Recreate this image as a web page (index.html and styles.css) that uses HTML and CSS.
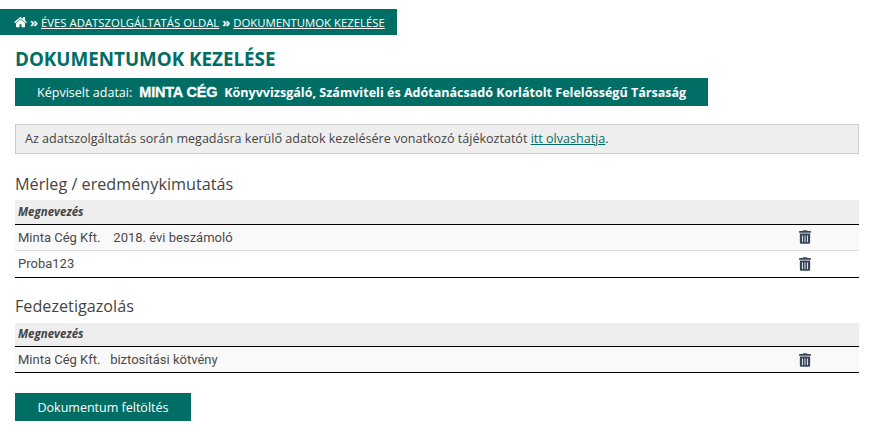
FILE: index.html
```html
<!DOCTYPE html>
<html lang="hu">
<head>
<meta charset="utf-8">
<title>Dokumentumok kezelése</title>
<link rel="stylesheet" href="styles.css">
</head>
<body>
<nav class="crumbs">
  <svg class="home" viewBox="0 0 1664 1408" aria-hidden="true"><path fill="currentColor" d="M1408 768v480q0 26-19 45t-45 19H960V928H704v384H320q-26 0-45-19t-19-45V768q0-1 .5-3t.5-3l575-474 575 474q1 2 1 6zm223-69-62 74q-8 9-21 11h-3q-13 0-21-7L832 200 140 777q-12 8-24 7-13-2-21-11l-62-74q-8-10-7-23.500t11-21.500L756 27q32-27 76-27t76 27l255 213V36q0-14 9-23t23-9h192q14 0 23 9t9 23v408l219 182q10 8 11 21.500t-7 23.500z"/></svg>
  <span class="sep">»</span>
  <a href="#">ÉVES ADATSZOLGÁLTATÁS OLDAL</a>
  <span class="sep">»</span>
  <a href="#">DOKUMENTUMOK KEZELÉSE</a>
</nav>
<main class="page">
  <h1>DOKUMENTUMOK KEZELÉSE</h1>
  <div class="rep">
    <span class="rep-label">Képviselt adatai:</span>
    <strong class="rep-logo">MINTA CÉG</strong>
    <strong class="rep-name">Könyvvizsgáló, Számviteli és Adótanácsadó Korlátolt Felelősségű Társaság</strong>
  </div>
  <p class="notice">Az adatszolgáltatás során megadásra kerülő adatok kezelésére vonatkozó tájékoztatót <a href="#">itt olvashatja</a>.</p>

  <h2 class="first">Mérleg / eredménykimutatás</h2>
  <table>
    <thead><tr><th>Megnevezés</th><th class="act"></th></tr></thead>
    <tbody>
      <tr class="odd"><td>Minta Cég Kft. &nbsp;&nbsp; 2018. évi beszámoló</td><td class="act"><svg class="trash" viewBox="0 0 448 512" aria-hidden="true"><path fill="currentColor" d="M32 464a48 48 0 0 0 48 48h288a48 48 0 0 0 48-48V128H32zm272-256a16 16 0 0 1 32 0v224a16 16 0 0 1-32 0zm-96 0a16 16 0 0 1 32 0v224a16 16 0 0 1-32 0zm-96 0a16 16 0 0 1 32 0v224a16 16 0 0 1-32 0zM432 32H312l-9.400-18.700A24 24 0 0 0 281.100 0H166.800a23.700 23.700 0 0 0-21.400 13.300L136 32H16A16 16 0 0 0 0 48v32a16 16 0 0 0 16 16h416a16 16 0 0 0 16-16V48a16 16 0 0 0-16-16z"/></svg></td></tr>
      <tr><td>Proba123</td><td class="act"><svg class="trash" viewBox="0 0 448 512" aria-hidden="true"><path fill="currentColor" d="M32 464a48 48 0 0 0 48 48h288a48 48 0 0 0 48-48V128H32zm272-256a16 16 0 0 1 32 0v224a16 16 0 0 1-32 0zm-96 0a16 16 0 0 1 32 0v224a16 16 0 0 1-32 0zm-96 0a16 16 0 0 1 32 0v224a16 16 0 0 1-32 0zM432 32H312l-9.400-18.700A24 24 0 0 0 281.100 0H166.800a23.700 23.700 0 0 0-21.400 13.300L136 32H16A16 16 0 0 0 0 48v32a16 16 0 0 0 16 16h416a16 16 0 0 0 16-16V48a16 16 0 0 0-16-16z"/></svg></td></tr>
    </tbody>
  </table>

  <h2>Fedezetigazolás</h2>
  <table>
    <thead><tr><th>Megnevezés</th><th class="act"></th></tr></thead>
    <tbody>
      <tr class="odd"><td>Minta Cég Kft. &nbsp; biztosítási kötvény</td><td class="act"><svg class="trash" viewBox="0 0 448 512" aria-hidden="true"><path fill="currentColor" d="M32 464a48 48 0 0 0 48 48h288a48 48 0 0 0 48-48V128H32zm272-256a16 16 0 0 1 32 0v224a16 16 0 0 1-32 0zm-96 0a16 16 0 0 1 32 0v224a16 16 0 0 1-32 0zm-96 0a16 16 0 0 1 32 0v224a16 16 0 0 1-32 0zM432 32H312l-9.400-18.700A24 24 0 0 0 281.100 0H166.800a23.700 23.700 0 0 0-21.400 13.300L136 32H16A16 16 0 0 0 0 48v32a16 16 0 0 0 16 16h416a16 16 0 0 0 16-16V48a16 16 0 0 0-16-16z"/></svg></td></tr>
    </tbody>
  </table>

  <button class="upload" type="button">Dokumentum feltöltés</button>
</main>
</body>
</html>
```
FILE: styles.css
```css
* { box-sizing: border-box; }
html, body { margin: 0; padding: 0; }
body {
  background: #fff;
  color: #444;
  font-family: "Open Sans", sans-serif;
  font-size: 12.55px;
  padding-top: 9px;
}
.crumbs {
  display: flex;
  align-items: center;
  gap: 3px;
  width: 397px;
  height: 26px;
  padding-left: 14px;
  background: #006e65;
  color: #fff;
  font-size: 11.35px;
  white-space: nowrap;
}
.crumbs a { color: #fff; text-decoration: underline; }
.crumbs .sep { font-weight: 700; font-size: 13px; }
.home { flex: none; width: 13px; height: 11px; }
.page { padding: 0 15px; }
h1 {
  margin: 9px 0 0;
  height: 30px;
  line-height: 30px;
  font-size: 18.8px;
  font-weight: 700;
  color: #006e65;
}
.rep {
  display: flex;
  align-items: center;
  width: 693px;
  height: 28px;
  margin-top: 4px;
  padding-left: 22px;
  background: #006e65;
  color: #fff;
  white-space: nowrap;
}
.rep-logo {
  margin: 0 7px 0 7px;
  font-family: "Liberation Sans", sans-serif;
  font-size: 14.5px;
  font-weight: 700;
  letter-spacing: -0.2px;
  -webkit-text-stroke: 0.3px #fff;
}
.rep-name { font-weight: 700; font-size: 12.55px; }
.notice {
  height: 30px;
  margin: 18px 0 0;
  line-height: 28px;
  padding-left: 9px;
  background: #eee;
  border: 1px solid #ccc;
}
.notice a { color: #006e65; text-decoration: underline; }
h2 {
  height: 29px;
  margin: 16px 0 0;
  line-height: 24px;
  font-size: 16.2px;
  font-weight: 400;
  color: #444;
}
h2.first { height: 28px; margin-top: 18px; }
table {
  width: 100%;
  border-collapse: collapse;
  border-bottom: 1px solid #000;
}
th {
  height: 24px;
  padding: 0 3px 1px;
  background: #eee;
  border-bottom: 1px solid #000;
  text-align: left;
  font-size: 11.5px;
  font-style: italic;
  font-weight: 700;
}
td {
  height: 27px;
  padding: 0 3px;
  border-top: 1px solid #ddd;
  font-family: Roboto, sans-serif;
  font-size: 13px;
  color: #4a4a4a;
}
tbody tr:first-child td { border-top: 0; height: 26px; }
tr.odd td { background: #f9f9f9; }
.act { width: 60px; padding: 0; }
.trash { display: block; width: 12px; height: 14px; color: #3a4558; }
.upload {
  display: block;
  width: 176px;
  height: 28px;
  margin-top: 20px;
  padding: 0;
  border: 0;
  background: #006e65;
  color: #fff;
  font-family: "Open Sans", sans-serif;
  font-size: 12.5px;
}
```
